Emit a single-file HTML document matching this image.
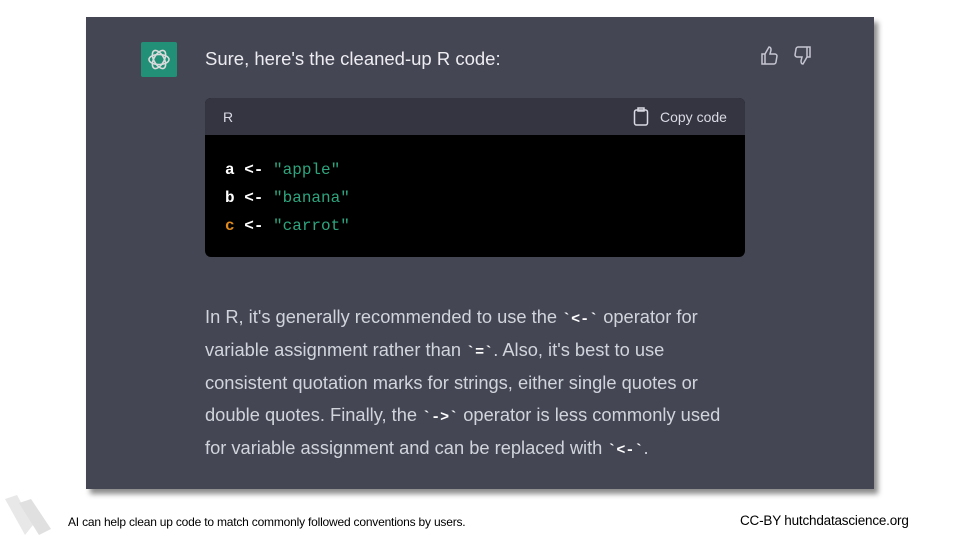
<!DOCTYPE html>
<html><head><style>
body{margin:0;width:960px;height:540px;background:#fff;position:relative;overflow:hidden;font-family:"Liberation Sans",sans-serif}
.panel{position:absolute;left:86px;top:17px;width:788px;height:472px;background:#444654;box-shadow:4px 5px 5px rgba(0,0,0,.45)}
.logo{position:absolute;left:141px;top:42px;width:36px;height:35px;background:#19a37f;opacity:.8;border-radius:2px}
.t{color:#ececf1;position:absolute}
.code{position:absolute;left:205px;top:98px;width:540px;height:159px;border-radius:6px;overflow:hidden;background:#000}
.hdr{height:37px;background:#343541;color:#d9d9e3;font-size:14px;position:relative}
pre{margin:0;position:absolute;left:20px;top:58px;font-family:"Liberation Mono",monospace;font-size:16px;line-height:28px;color:#fff;font-weight:bold}
.s{color:#2ea57f;font-weight:normal}
p{position:absolute;left:205px;top:301px;width:540px;margin:0;font-size:18.3px;line-height:32.8px;color:#d1d5db}
code{font-family:"Liberation Mono",monospace;font-weight:bold;font-size:15px;color:#fff;line-height:0}
</style></head><body>
<div class="panel"></div>
<div class="logo"><svg width="36" height="35" viewBox="0 0 36 35"><g fill="none" stroke="#fff" stroke-width="1.6"><ellipse cx="18" cy="17.5" rx="10" ry="5" transform="rotate(60 18 17.5)"/><ellipse cx="18" cy="17.5" rx="10" ry="5" transform="rotate(-60 18 17.5)"/><ellipse cx="18" cy="17.5" rx="10" ry="5"/></g></svg></div>
<div class="t" style="left:205px;top:48px;font-size:18.5px">Sure, here's the cleaned-up R code:</div>
<svg style="position:absolute;left:760px;top:46px" width="52" height="20" viewBox="0 0 52 20" fill="none" stroke="#c5c5d2" stroke-width="1.5"><path d="M2 8h3v10H2zM5 8l4-7c2 0 2 2 2 3l-1 4h5c1 0 2 1 2 2l-1 6c0 1-1 2-2 2H5"/><path d="M50 11h-3V1h3zM47 11l-4 7c-2 0-2-2-2-3l1-4h-5c-1 0-2-1-2-2l1-6c0-1 1-2 2-2h9"/></svg>
<div class="code"><div class="hdr"><span style="position:absolute;left:18px;top:11px">R</span>
<svg style="position:absolute;left:428px;top:9px" width="16" height="19" viewBox="0 0 16 19" fill="none" stroke="#d9d9e3" stroke-width="1.5"><rect x="1.5" y="3" width="13" height="15" rx="2"/><rect x="5" y="1" width="6" height="3"/></svg>
<span style="position:absolute;left:455px;top:11px">Copy code</span></div>
<pre>a &lt;- <span class="s">"apple"</span>
b &lt;- <span class="s">"banana"</span>
<span style="color:#df8a1a">c</span> &lt;- <span class="s">"carrot"</span></pre></div>
<p>In R, it's generally recommended to use the <code>`&lt;-`</code> operator for variable assignment rather than <code>`=`</code>. Also, it's best to use consistent quotation marks for strings, either single quotes or double quotes. Finally, the <code>`-&gt;`</code> operator is less commonly used for variable assignment and can be replaced with <code>`&lt;-`</code>.</p>
<svg style="position:absolute;left:3px;top:495px" width="48" height="42"><polygon points="2,4 14,0 30,30 22,40" fill="#e8e8e8"/><polygon points="16,8 28,4 48,34 36,40" fill="#e0e0e0"/></svg>
<div style="position:absolute;left:68px;top:515px;font-size:12px;color:#000;letter-spacing:-0.2px">AI can help clean up code to match commonly followed conventions by users.</div>
<div style="position:absolute;left:740px;top:513px;font-size:13.5px;color:#000;letter-spacing:-0.2px">CC-BY hutchdatascience.org</div>
</body></html>
